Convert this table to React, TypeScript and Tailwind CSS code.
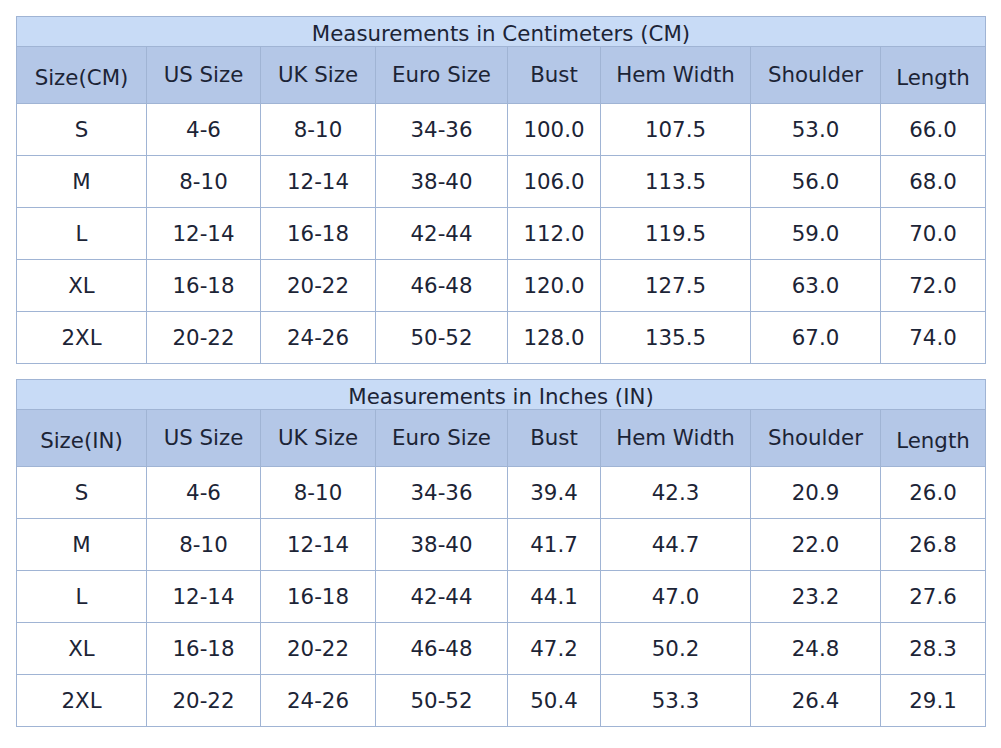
import React from "react";

const headers = ["US Size", "UK Size", "Euro Size", "Bust", "Hem Width", "Shoulder", "Length"];

const cmRows = [
  ["S", "4-6", "8-10", "34-36", "100.0", "107.5", "53.0", "66.0"],
  ["M", "8-10", "12-14", "38-40", "106.0", "113.5", "56.0", "68.0"],
  ["L", "12-14", "16-18", "42-44", "112.0", "119.5", "59.0", "70.0"],
  ["XL", "16-18", "20-22", "46-48", "120.0", "127.5", "63.0", "72.0"],
  ["2XL", "20-22", "24-26", "50-52", "128.0", "135.5", "67.0", "74.0"],
];

const inRows = [
  ["S", "4-6", "8-10", "34-36", "39.4", "42.3", "20.9", "26.0"],
  ["M", "8-10", "12-14", "38-40", "41.7", "44.7", "22.0", "26.8"],
  ["L", "12-14", "16-18", "42-44", "44.1", "47.0", "23.2", "27.6"],
  ["XL", "16-18", "20-22", "46-48", "47.2", "50.2", "24.8", "28.3"],
  ["2XL", "20-22", "24-26", "50-52", "50.4", "53.3", "26.4", "29.1"],
];

function SizeTable({ title, first, rows }: { title: string; first: string; rows: string[][] }) {
  const hdr = [first, ...headers];
  return (
    <div className="grid w-[970px] grid-cols-[130px_114px_115px_132px_93px_150px_130px_105px] border-l border-t border-[#a0b4d4]">
      <div className="col-span-8 flex h-[30px] items-center justify-center border-b border-r border-[#a0b4d4] bg-[#c8dbf6] pt-[5px] leading-none">
        {title}
      </div>
      {hdr.map((h, i) => (
        <div
          key={h}
          className={
            "flex h-[57px] items-center justify-center border-b border-r border-[#a0b4d4] bg-[#b4c7e7] leading-none " +
            (i === 0 || i === 7 ? "pt-[5px]" : "")
          }
        >
          {h}
        </div>
      ))}
      {rows.map((r, ri) =>
        r.map((c, ci) => (
          <div
            key={ri + "-" + ci}
            className="flex h-[52px] items-center justify-center border-b border-r border-[#a0b4d4] bg-white leading-none"
          >
            {c}
          </div>
        ))
      )}
    </div>
  );
}

export default function App() {
  return (
    <div
      className="flex h-[748px] w-[1001px] flex-col gap-[15px] bg-white pl-4 pt-4 text-[21.33px] text-[#1c2436]"
      style={{ fontFamily: '"DejaVu Sans", Verdana, sans-serif' }}
    >
      <SizeTable title="Measurements in Centimeters (CM)" first="Size(CM)" rows={cmRows} />
      <SizeTable title="Measurements in Inches (IN)" first="Size(IN)" rows={inRows} />
    </div>
  );
}
